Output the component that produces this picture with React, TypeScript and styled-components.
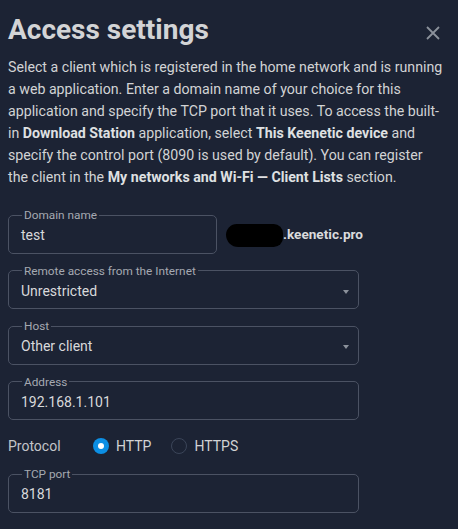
import React, { useState } from 'react';
import styled, { createGlobalStyle } from 'styled-components';

const GlobalStyle = createGlobalStyle`
  html, body {
    margin: 0;
    padding: 0;
    background: #1c2334;
  }
  * {
    box-sizing: border-box;
  }
`;

const Dialog = styled.div`
  position: relative;
  width: 458px;
  min-height: 529px;
  padding: 13px 14px 0 8px;
  background: #1c2334;
  font-family: Roboto, 'Liberation Sans', sans-serif;
  color: #d2d3d5;
`;

const Header = styled.div`
  display: flex;
  align-items: center;
  justify-content: space-between;
`;

const Title = styled.h2`
  margin: 0;
  font-size: 28px;
  line-height: 34px;
  font-weight: 700;
  color: #d3d4d6;
`;

const CloseButton = styled.button`
  display: flex;
  align-items: center;
  justify-content: center;
  width: 24px;
  height: 24px;
  margin: 6px -1px 0 0;
  padding: 0;
  border: none;
  background: transparent;
  cursor: pointer;
`;

const Description = styled.p`
  margin: 9px 0 20px;
  font-size: 14.2px;
  line-height: 22px;
  color: #d2d3d5;

  b {
    font-weight: 700;
    color: #dfe0e2;
  }
`;

const Row = styled.div`
  display: flex;
  align-items: center;
  gap: 9px;
`;

const Field = styled.fieldset<{ $width: number }>`
  width: ${(p) => p.$width}px;
  margin: 0 0 10px;
  padding: 0 12px;
  border: 1px solid #4b5263;
  border-radius: 5px;
  min-inline-size: 0;
`;

const Legend = styled.legend`
  margin-left: 1px;
  padding: 0 2px;
  font-size: 11.8px;
  line-height: 14px;
  color: #a5a9b1;
`;

const Value = styled.div`
  display: flex;
  align-items: center;
  justify-content: space-between;
  padding: 4px 0 8.5px 0;
  font-size: 14px;
  line-height: 18px;
  color: #d8d9db;
`;

const Arrow = styled.span`
  width: 0;
  height: 0;
  margin: 2px -3px 0 0;
  border-left: 3.5px solid transparent;
  border-right: 3.5px solid transparent;
  border-top: 4px solid #8b919b;
`;

const Redacted = styled.span`
  display: inline-block;
  width: 57px;
  height: 23px;
  margin-top: 2px;
  background: #000;
  border-radius: 14px 12px 12px 16px;
`;

const Suffix = styled.span`
  display: flex;
  align-items: center;
  margin: 0 0 10px 0;
  padding-top: 7px;
  font-size: 13.6px;
  font-weight: 700;
  color: #dadbdd;
`;

const ProtocolRow = styled.div`
  display: flex;
  align-items: center;
  height: 32px;
  margin: 2px 0 5px;
`;

const ProtocolLabel = styled.span`
  width: 85px;
  font-size: 14px;
  color: #c3c5c9;
`;

const RadioOption = styled.label`
  display: flex;
  align-items: center;
  gap: 7px;
  margin-right: 20px;
  font-size: 14px;
  color: #d2d3d5;
  cursor: pointer;
`;

const RadioCircle = styled.span<{ $checked: boolean }>`
  display: flex;
  align-items: center;
  justify-content: center;
  width: 16px;
  height: 16px;
  border-radius: 50%;
  background: ${(p) => (p.$checked ? '#0c8fe4' : 'transparent')};
  border: ${(p) => (p.$checked ? 'none' : '1.5px solid #3b4559')};

  &::after {
    content: '';
    display: ${(p) => (p.$checked ? 'block' : 'none')};
    width: 6px;
    height: 6px;
    border-radius: 50%;
    background: #fff;
  }
`;

const CloseIcon = () => (
  <svg width="14" height="14" viewBox="0 0 14 14">
    <path d="M1 1 L13 13 M13 1 L1 13" stroke="#8b919b" strokeWidth="1.8" />
  </svg>
);

const OutlinedField = ({
  label,
  value,
  width = 351,
  select = false,
}: {
  label: string;
  value: string;
  width?: number;
  select?: boolean;
}) => (
  <Field $width={width}>
    <Legend>{label}</Legend>
    <Value>
      {value}
      {select && <Arrow />}
    </Value>
  </Field>
);

const App = () => {
  const [protocol, setProtocol] = useState('http');

  return (
    <>
      <GlobalStyle />
      <Dialog>
        <Header>
          <Title>Access settings</Title>
          <CloseButton aria-label="Close">
            <CloseIcon />
          </CloseButton>
        </Header>
        <Description>
          Select a client which is registered in the home network and is running a web
          application. Enter a domain name of your choice for this application and specify
          the TCP port that it uses. To access the built-in <b>Download Station</b>{' '}
          application, select <b>This Keenetic device</b> and specify the control port (8090
          is used by default). You can register the client in the{' '}
          <b>My networks and Wi-Fi — Client Lists</b> section.
        </Description>

        <Row>
          <OutlinedField label="Domain name" value="test" width={209} />
          <Suffix>
            <Redacted />
            .keenetic.pro
          </Suffix>
        </Row>
        <OutlinedField label="Remote access from the Internet" value="Unrestricted" select />
        <OutlinedField label="Host" value="Other client" select />
        <OutlinedField label="Address" value="192.168.1.101" />

        <ProtocolRow>
          <ProtocolLabel>Protocol</ProtocolLabel>
          <RadioOption onClick={() => setProtocol('http')}>
            <RadioCircle $checked={protocol === 'http'} />
            HTTP
          </RadioOption>
          <RadioOption onClick={() => setProtocol('https')}>
            <RadioCircle $checked={protocol === 'https'} />
            HTTPS
          </RadioOption>
        </ProtocolRow>

        <OutlinedField label="TCP port" value="8181" />
      </Dialog>
    </>
  );
};

export default App;
